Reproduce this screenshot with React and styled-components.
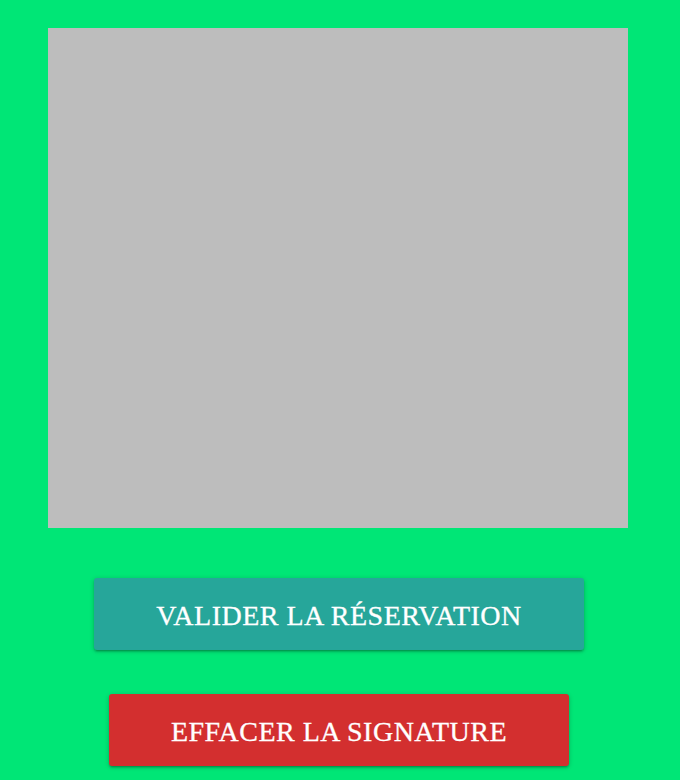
import React from 'react';
import styled, { createGlobalStyle } from 'styled-components';

const GlobalStyle = createGlobalStyle`
  html, body {
    margin: 0;
    padding: 0;
    background-color: #00e676;
  }
`

function App() {
  return (
    <Page>
      <GlobalStyle />
      <SignaturePad />
      <ActionButton color="#26a69a">Valider la réservation</ActionButton>
      <ActionButton color="#d32f2f" spacing={44}>Effacer la signature</ActionButton>
    </Page>
  )
}

export default App

const Page = styled.div`
  width: 680px;
  height: 780px;
  padding: 28px 4px 0 0;
  box-sizing: border-box;
  display: flex;
  flex-direction: column;
  align-items: center;
`

const SignaturePad = styled.div`
  width: 580px;
  height: 500px;
  background-color: #bdbdbd;
`

const ActionButton = styled.button`
  margin-top: ${props => props.spacing || 50}px;
  margin-left: 2px;
  height: 72px;
  padding: 3px 62px 0;
  border: none;
  border-radius: 3px;
  background-color: ${props => props.color};
  color: white;
  font-family: "Liberation Serif", serif;
  font-size: 28px;
  text-transform: uppercase;
  letter-spacing: 0.5px;
  -webkit-text-stroke: 0.3px white;
  box-shadow: 0 2px 2px 0 rgba(0,0,0,0.14), 0 3px 1px -2px rgba(0,0,0,0.12), 0 1px 5px 0 rgba(0,0,0,0.2);
  cursor: pointer;
`
